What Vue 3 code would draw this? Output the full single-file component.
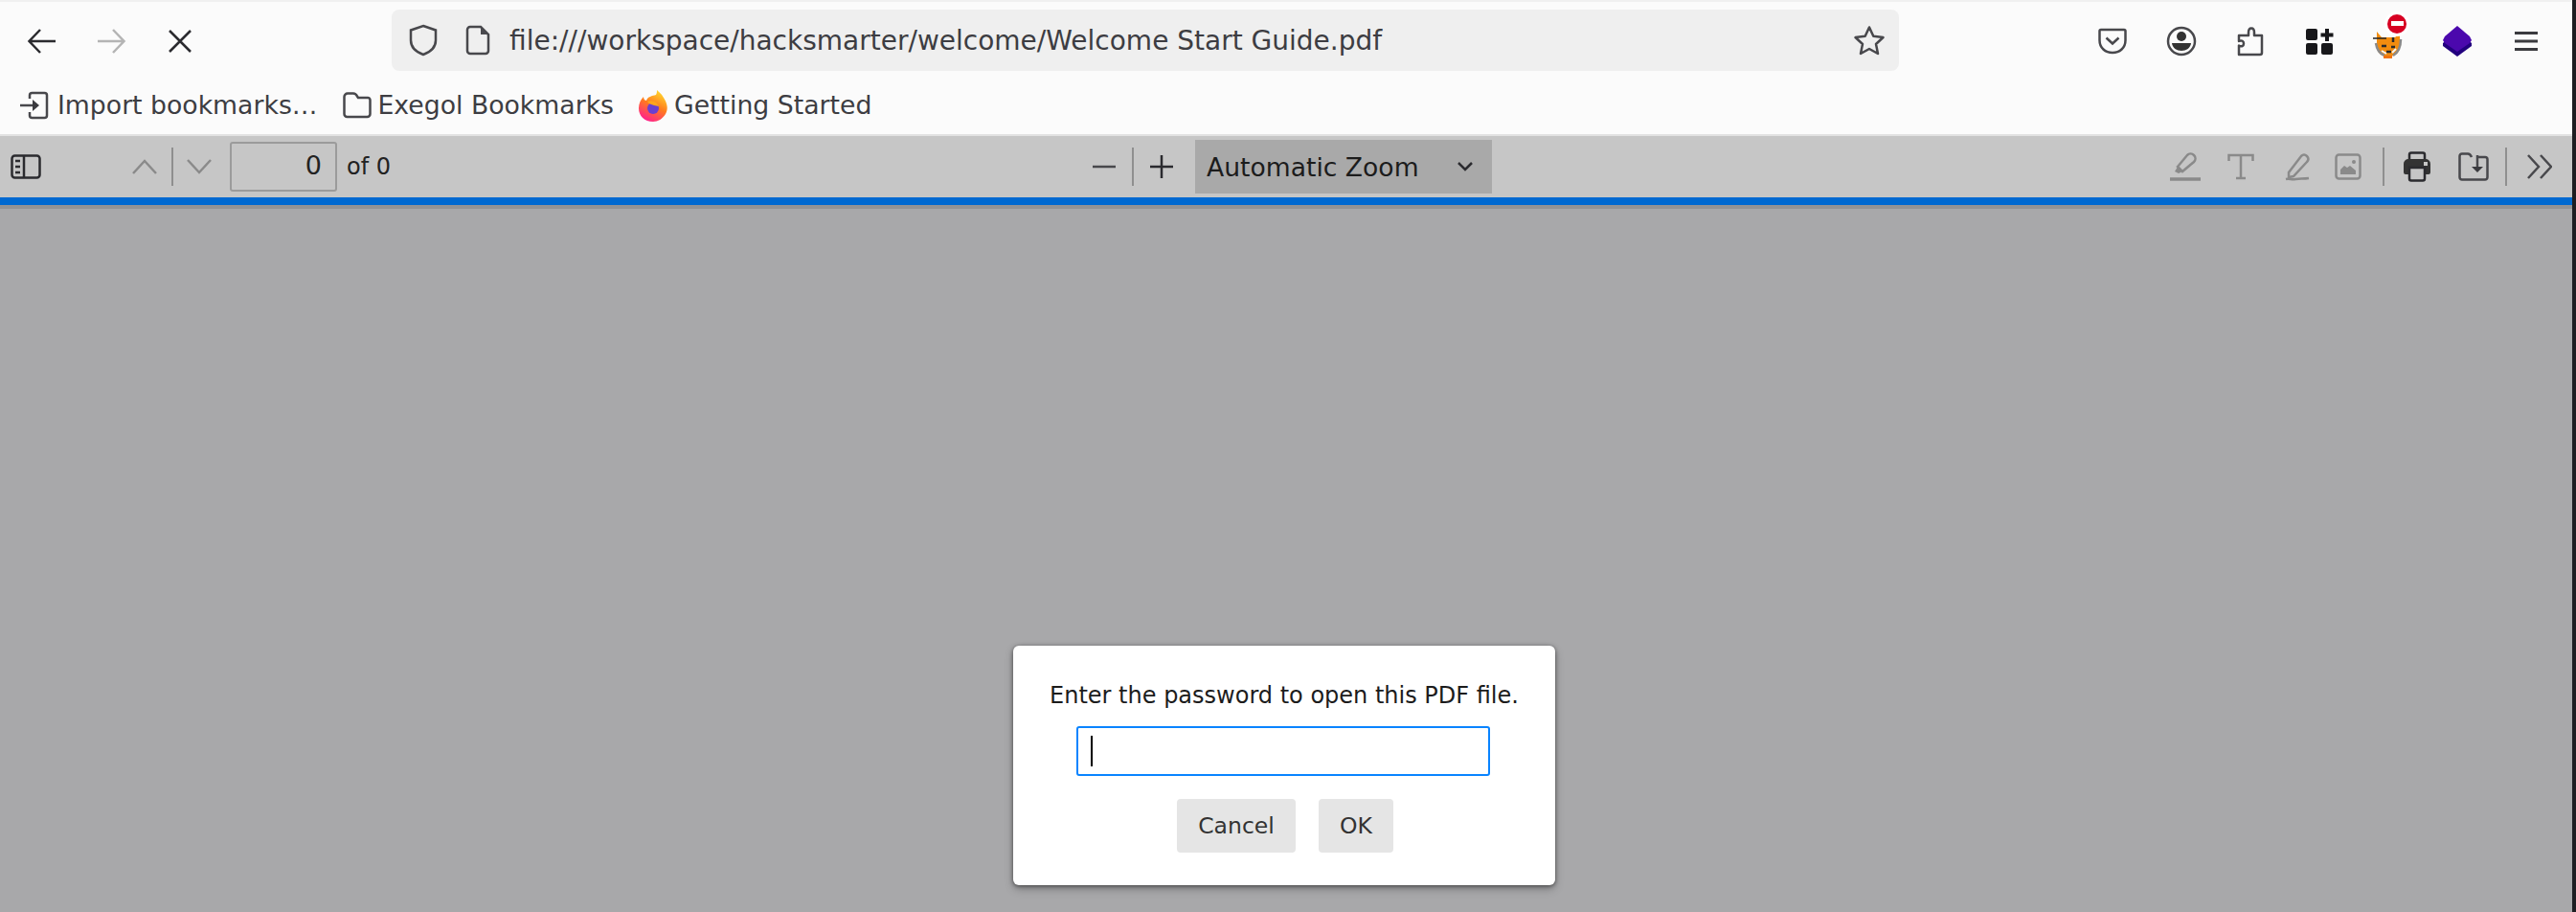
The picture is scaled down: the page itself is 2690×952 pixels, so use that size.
<template>
  <div class="screen">
    <div class="browser">
      <div class="top-strip"></div>

      <div class="nav-row">
        <button class="nav-btn">
          <svg width="32" height="32" viewBox="0 0 32 32"><path d="M30 16H3M14 4 2.500 16 14 28" class="s dark" /></svg>
        </button>
        <button class="nav-btn">
          <svg width="32" height="32" viewBox="0 0 32 32"><path d="M2 16h27M18 4l11.500 12L18 28" class="s faint" /></svg>
        </button>
        <button class="nav-btn">
          <svg width="28" height="28" viewBox="0 0 28 28"><path d="M3 3l22 22M25 3 3 25" class="s dark" /></svg>
        </button>

        <div class="url-bar">
          <svg class="shield" width="30" height="34" viewBox="0 0 30 34"><path d="M15 2 28 6.500V17c0 8-6 12.500-13 15C8 29.500 2 25 2 17V6.500Z" class="s mid" /></svg>
          <svg class="file" width="26" height="32" viewBox="0 0 26 32"><path d="M5 2h11l8 8v17a3 3 0 0 1-3 3H5a3 3 0 0 1-3-3V5a3 3 0 0 1 3-3Z" class="s mid" /><path d="M16 2l8 8h-8Z" fill="#4a4a4f" /></svg>
          <span class="url-text">file:///workspace/hacksmarter/welcome/Welcome Start Guide.pdf</span>
          <svg class="star" width="34" height="32" viewBox="0 0 34 32"><path d="M17 2.500l4.300 9.300 10.200 1.200-7.500 7 2 10-9-5-9 5 2-10-7.500-7 10.200-1.200Z" class="s mid" stroke-linejoin="round" /></svg>
        </div>

        <div class="tools">
          <button class="nav-btn">
            <svg width="30" height="28" viewBox="0 0 30 28"><path d="M3 2h24a1.500 1.500 0 0 1 1.500 1.500V13c0 8-6 13-13.500 13S1.500 21 1.500 13V3.500A1.500 1.500 0 0 1 3 2Z" class="s mid" /><path d="M8.500 10.500 15 16.500l6.500-6" class="s mid" /></svg>
          </button>
          <button class="nav-btn">
            <svg width="32" height="32" viewBox="0 0 32 32"><circle cx="16" cy="16" r="14" class="s mid" /><circle cx="16" cy="11" r="5" fill="#333" /><path d="M6 18h20c-.5 5-5 8-10 8S6.500 23 6 18Z" fill="#333" /></svg>
          </button>
          <button class="nav-btn">
            <svg width="28" height="32" viewBox="0 0 28 32"><path d="M2 30h22a2 2 0 0 0 2-2V10h-8V7c0-6-6-6-6 0v3H2v6c3-1.500 5 0 5 2.500S5 22 2 20.500Z" class="s mid" stroke-linejoin="round" /></svg>
          </button>
          <button class="nav-btn">
            <svg width="30" height="30" viewBox="0 0 30 30" fill="#17171a"><rect x="1" y="2" width="12" height="12" rx="2" /><rect x="1" y="17" width="12" height="12" rx="2" /><rect x="17" y="17" width="12" height="12" rx="2" /><path d="M21 2h4v4.500h4.500v4H25V15h-4v-4.500h-4.500v-4H21Z" /></svg>
          </button>
          <button class="nav-btn">
            <span class="tiger">
              <svg width="32" height="30" viewBox="0 0 32 30">
                <path d="M4 2l5 6h14l5-4v14c0 6-5 10-12 10S4 24 4 18Z" fill="#f28c0f" />
                <path d="M3 14c1 7 4 11 9 13M29 10c0 9-3 14-8 17" fill="none" stroke="#8a8a8a" stroke-width="2.500" />
                <path d="M0 9h14" stroke="#222" stroke-width="1.500" />
                <path d="M9 17h5M19 18h4M14 23h5M21 8v5" stroke="#2a2a2a" stroke-width="2.500" />
                <path d="M9 22l5 3M24 20l-4 4" stroke="#f5f5f5" stroke-width="2" />
                <rect x="11" y="27" width="9" height="3" fill="#f0720c" />
              </svg>
              <span class="blocked"><i></i></span>
            </span>
          </button>
          <button class="nav-btn">
            <svg width="32" height="32" viewBox="0 0 32 32"><path d="M1 18v3l15 11 15-11v-3L26 14H6Z" fill="#22007e" /><path d="M16 0 29 11l2 4-2 3-13 9-13-9-2-3 2-4Z" fill="#4b08ad" /></svg>
          </button>
          <button class="nav-btn">
            <svg width="26" height="26" viewBox="0 0 26 26"><path d="M1 4.500h24M1 13h24M1 21.500h24" stroke="#3a3a3e" stroke-width="3" /></svg>
          </button>
        </div>
      </div>

      <div class="bookmarks">
        <div class="mark">
          <svg width="30" height="30" viewBox="0 0 30 30"><path d="M10 8V4.500A2.500 2.500 0 0 1 12.500 2h13A2.500 2.500 0 0 1 28 4.500v21a2.500 2.500 0 0 1-2.500 2.500h-13a2.500 2.500 0 0 1-2.500-2.500V22" class="s mid" /><path d="M0 15h14" class="s mid" /><path d="M13 9l7 6-7 6Z" fill="#3a3a3e" /></svg>
          <span>Import bookmarks…</span>
        </div>
        <div class="mark folder">
          <svg width="30" height="28" viewBox="0 0 30 28"><path d="M1.500 5A3.500 3.500 0 0 1 5 1.500h6c2 0 3 1 4 3l1 1.500h10a2.500 2.500 0 0 1 2.500 2.500V23a3 3 0 0 1-3 3H4.500a3 3 0 0 1-3-3Z" class="s mid" /></svg>
          <span>Exegol Bookmarks</span>
        </div>
        <div class="mark firefox">
          <svg width="32" height="34" viewBox="0 0 32 34">
            <defs>
              <linearGradient id="fx" x1="0.800" y1="0" x2="0.300" y2="1">
                <stop offset="0" stop-color="#ffe02e" />
                <stop offset="0.500" stop-color="#ff7a1e" />
                <stop offset="1" stop-color="#ff1f8f" />
              </linearGradient>
            </defs>
            <path d="M20 1c3 3 5 4 7 8 4 6 5 12 2 17-3 5-8 8-13 8C7 34 1 28 1 20 1 15 3 11 6 8c0 3 2 4 3 4 1-4 6-5 10-6 1-2 1-3 1-5Z" fill="url(#fx)" />
            <circle cx="16" cy="20" r="6" fill="#6a3fd0" />
            <path d="M10 13c5-2 10 0 12 5l-5-1c-3-1-6-2-7-4Z" fill="#ffa51e" />
          </svg>
          <span>Getting Started</span>
        </div>
      </div>

      <div class="pdf-bar">
        <svg class="sidebar-ico" width="32" height="26" viewBox="0 0 32 26"><rect x="1.500" y="1.500" width="29" height="23" rx="3" class="s dark" /><path d="M14 1.500v23" class="s dark" /><path d="M5 7h5M5 13h5M5 19h5" class="s dark" /></svg>
        <svg class="up" width="26" height="16" viewBox="0 0 26 16"><path d="M1 15 13 2l12 13" class="s dim" /></svg>
        <span class="sep sep-pages"></span>
        <svg class="down" width="26" height="16" viewBox="0 0 26 16"><path d="M1 1l12 13L25 1" class="s dim" /></svg>
        <div class="page-input">0</div>
        <span class="page-of">of 0</span>

        <svg class="minus" width="24" height="4" viewBox="0 0 24 4"><path d="M0 2h24" class="s mid" /></svg>
        <span class="sep sep-zoom"></span>
        <svg class="plus" width="24" height="24" viewBox="0 0 24 24"><path d="M0 12h24M12 0v24" class="s dark" /></svg>
        <div class="zoom-select">
          <span>Automatic Zoom</span>
          <svg width="16" height="10" viewBox="0 0 16 10"><path d="M1 1l7 7 7-7" class="s dark" /></svg>
        </div>

        <div class="pdf-tools">
          <svg class="highlight" width="32" height="30" viewBox="0 0 32 30"><path d="M8 15 18 3c2-2 5-2 7 0s2 5 0 7L13 20Z" class="s dim" /><path d="M8 15l5 5-4 2-4-2Z" fill="#8a8a8a" /><path d="M0 28h32" stroke="#8a8a8a" stroke-width="3.500" /></svg>
          <svg class="text-ico" width="28" height="28" viewBox="0 0 28 28"><path d="M1.500 8V2h25v6M14 2v24M9 26h10" class="s dim" stroke-width="3" /></svg>
          <svg class="pen" width="28" height="30" viewBox="0 0 28 30"><path d="M4 21 17 4c2-2 4-2 6 0s2 4 0 6L9 25l-5 1Z" class="s dim" /><path d="M1 28c4-1 6 1 10 0s8 0 14-1" class="s dim" /></svg>
          <svg class="image-ico" width="28" height="28" viewBox="0 0 28 28"><rect x="1.500" y="1.500" width="25" height="25" rx="3" class="s dim" /><path d="M6 22v-5l4-4 3 2 3-2 6 5v4Z" fill="#8a8a8a" /><circle cx="20" cy="9" r="2" fill="#8a8a8a" /></svg>
          <span class="sep sep-a"></span>
          <svg class="print" width="28" height="32" viewBox="0 0 28 32"><path d="M6 9V3.500A2 2 0 0 1 8 1.500h12a2 2 0 0 1 2 2V9" class="s dark" /><path d="M5 8h18a5 5 0 0 1 5 5v9a2 2 0 0 1-2 2h-3v-7H5v7H2a2 2 0 0 1-2-2v-9a5 5 0 0 1 5-5Z" fill="#333" /><path d="M6 17h16v11.500a2 2 0 0 1-2 2H8a2 2 0 0 1-2-2Z" class="s dark" /><rect x="21" y="11" width="4" height="4" fill="#c6c6c6" /></svg>
          <svg class="save" width="32" height="30" viewBox="0 0 32 30"><path d="M19 5h9a2.500 2.500 0 0 1 2.500 2.500V26a2.500 2.500 0 0 1-2.500 2.500H4A2.500 2.500 0 0 1 1.500 26V4A2.500 2.500 0 0 1 4 1.500h6c2 0 3 1 4 3.500" class="s mid" /><path d="M20 3v14" class="s mid" /><path d="M14 15h12l-6 6Z" fill="#3a3a3e" /></svg>
          <span class="sep sep-b"></span>
          <svg class="more" width="26" height="26" viewBox="0 0 26 26"><path d="M1 1l11 12L1 25M14 1l11 12-11 12" class="s mid" /></svg>
        </div>
      </div>

      <div class="blue-line"></div>

      <div class="viewer">
        <div class="dialog">
          <p class="dialog-text">Enter the password to open this PDF file.</p>
          <div class="password"><span class="caret"></span></div>
          <div class="dialog-actions">
            <button class="dlg-btn cancel">Cancel</button>
            <button class="dlg-btn ok">OK</button>
          </div>
        </div>
      </div>
    </div>
    <div class="edge"></div>
  </div>
</template>

<script setup>
</script>

<style>
html, body { margin: 0; overflow: hidden; }
</style>

<style scoped>
.screen { display: flex; width: 2690px; height: 952px; font-family: "DejaVu Sans", sans-serif; color: #333; background: #fbfbfb; }
.browser { width: 2686px; display: flex; flex-direction: column; }
.edge { width: 4px; background: #1e1e22; }

.s { fill: none; stroke-width: 2.500; }
.dark { stroke: #2b2b2f; }
.mid { stroke: #48484c; }
.faint { stroke: #b4b4b4; }
.dim { stroke: #8a8a8a; }

.top-strip { height: 2px; background: #f0f0f0; }

.nav-row { height: 81px; display: flex; align-items: center; padding-left: 8px; }
.nav-btn { width: 72px; height: 64px; padding: 0; border: 0; background: none; display: flex; align-items: center; justify-content: center; }

.url-bar { width: 1574px; height: 64px; margin-left: 185px; margin-top: -1px; display: flex; align-items: center; background: #efefef; border-radius: 8px; }
.shield { margin-left: 18px; }
.file { margin-left: 29px; }
.url-text { margin-left: 20px; font-size: 28px; color: #3d3d42; white-space: nowrap; }
.star { margin-left: auto; margin-right: 14px; }
.tools { display: flex; margin-left: 187px; }

.tiger { position: relative; display: block; width: 32px; height: 30px; margin-top: 6px; }
.blocked { position: absolute; top: -16px; left: 15px; width: 20px; height: 20px; border-radius: 50%; background: #d70022; display: flex; align-items: center; justify-content: center; box-shadow: 0 0 0 3px #fff; }
.blocked i { display: block; width: 13px; height: 5px; background: #fff; }

.bookmarks { height: 57px; display: flex; align-items: center; padding: 0 0 4px 21px; box-sizing: border-box; font-size: 26.700px; color: #3d3d42; }
.mark { display: flex; align-items: center; gap: 9px; white-space: nowrap; }
.folder { margin-left: 27px; gap: 6px; }
.firefox { margin-left: 25px; gap: 6px; }

.pdf-bar { height: 64px; flex: none; display: flex; align-items: center; background: #c6c6c6; border-top: 2px solid #e2e2e2; box-sizing: content-box; color: #222; }
.sep { width: 2px; height: 40px; background: #8f8f8f; flex: none; }
.sidebar-ico { margin-left: 11px; }
.up { margin-left: 95px; }
.sep-pages { margin-left: 15px; }
.down { margin-left: 14px; }
.page-input { width: 112px; height: 52px; box-sizing: border-box; margin-left: 19px; border: 2px solid #9b9b9b; border-radius: 3px; text-align: right; padding-right: 14px; font-size: 27px; line-height: 46px; color: #222; }
.page-of { margin-left: 10px; font-size: 24px; color: #222; }
.minus { margin-left: 733px; }
.sep-zoom { margin-left: 17px; }
.plus { margin-left: 17px; }
.zoom-select { width: 310px; height: 56px; margin-left: 23px; display: flex; align-items: center; justify-content: space-between; padding: 0 20px 0 12px; box-sizing: border-box; background: #a9a9a9; font-size: 26.600px; color: #1c1c1c; }
.pdf-tools { margin-left: 708px; display: flex; align-items: center; }
.text-ico { margin-left: 28px; }
.pen { margin-left: 32px; }
.image-ico { margin-left: 24px; }
.sep-a { margin-left: 22px; }
.print { margin-left: 20px; }
.save { margin-left: 29px; }
.sep-b { margin-left: 17px; }
.more { margin-left: 21px; }

.blue-line { height: 8px; flex: none; background: #0069d1; border-bottom: 4px solid #939395; }

.viewer { flex: 1; display: flex; flex-direction: column; align-items: center; justify-content: flex-end; padding-bottom: 28px; background: #a8a8aa; }
.dialog { width: 566px; height: 250px; box-sizing: border-box; margin-right: 4px; padding-top: 35px; display: flex; flex-direction: column; align-items: center; background: #fff; border-radius: 6px; box-shadow: 0 1px 4px rgba(0, 0, 0, .5), 0 4px 10px rgba(0, 0, 0, .25); }
.dialog-text { margin: 0; font-size: 24px; line-height: 34px; color: #1c1c1c; white-space: nowrap; }
.password { width: 432px; height: 52px; box-sizing: border-box; margin-top: 15px; margin-right: 3px; padding: 8px 13px; border: 2px solid #0a84ff; border-radius: 3px; }
.caret { display: block; width: 2px; height: 32px; background: #000; }
.dialog-actions { display: flex; gap: 24px; margin-top: 24px; margin-left: 2px; }
.dlg-btn { height: 56px; padding: 0; border: 0; border-radius: 4px; background: #e5e5e5; color: #333; font: 23.500px "DejaVu Sans", sans-serif; }
.cancel { width: 124px; }
.ok { width: 78px; }
</style>
